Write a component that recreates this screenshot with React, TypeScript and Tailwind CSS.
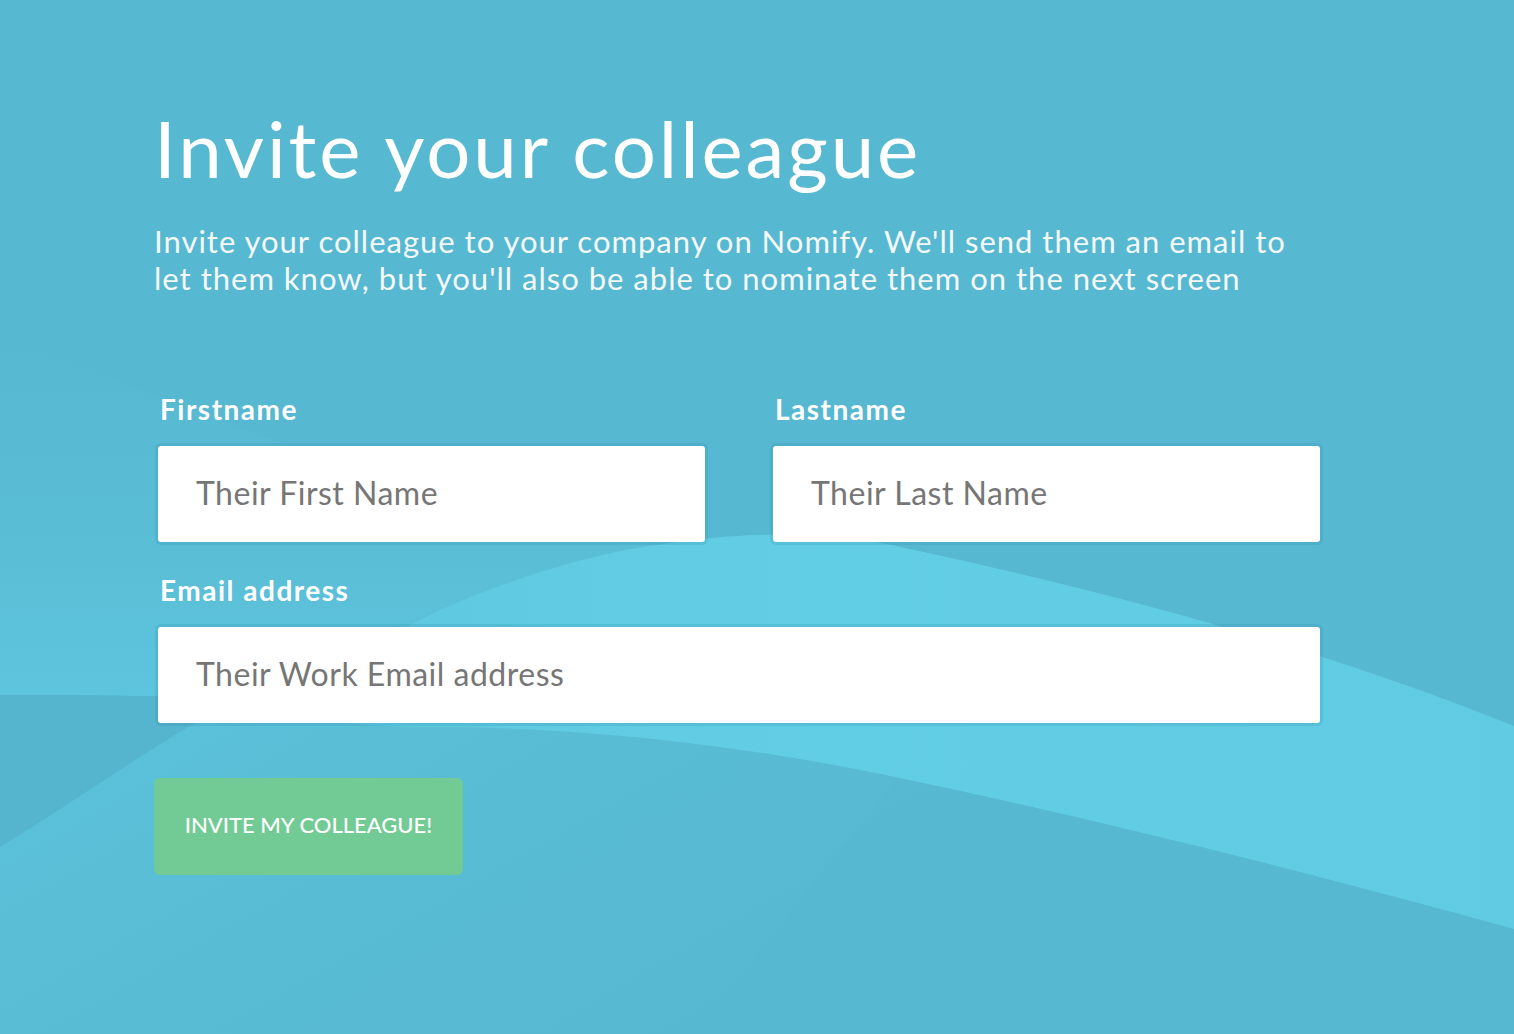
import { useState } from "react";

function Waves() {
  return (
    <svg
      className="absolute inset-0 h-full w-full"
      viewBox="0 0 1514 1034"
      preserveAspectRatio="none"
      aria-hidden="true"
    >
      <defs>
        <linearGradient id="glow" x1="0" y1="0" x2="0" y2="1">
          <stop offset="0" stopColor="#5bbdd6" stopOpacity="0" />
          <stop offset="1" stopColor="#5ec5de" stopOpacity="1" />
        </linearGradient>
        <linearGradient id="band" x1="0" y1="0" x2="1" y2="0">
          <stop offset="0" stopColor="#5ec7df" />
          <stop offset="0.45" stopColor="#62cee5" />
          <stop offset="1" stopColor="#60cbe2" />
        </linearGradient>
        <linearGradient id="low" x1="0" y1="0.2" x2="0.7" y2="0.6">
          <stop offset="0" stopColor="#5cc3dc" />
          <stop offset="0.55" stopColor="#59bcd5" />
          <stop offset="1" stopColor="#57b8d1" />
        </linearGradient>
      </defs>
      <rect width="1514" height="1034" fill="#57b8d1" />
      <path
        d="M0 330 C 200 420, 420 500, 660 545 L 412 622 C 330 660, 280 690, 240 700 C 160 695, 80 695, 0 695 Z"
        fill="url(#glow)"
      />
      <path d="M0 695 C 80 695, 160 695, 240 700 L 200 720 C 130 760, 60 810, 0 847 Z" fill="#55b5ce" />
      <path
        d="M0 847 C 70 805, 140 755, 200 720 C 290 668, 420 600, 657 545 C 760 528, 850 535, 900 547 C 1150 600, 1350 660, 1514 726 L 1514 1034 L 0 1034 Z"
        fill="url(#low)"
      />
      <path d="M900 778 C 1100 820, 1300 870, 1514 929 L 1514 1034 L 700 1034 C 760 950, 830 860, 900 778 Z" fill="#57b8d1" opacity="0.55" />
      <path
        d="M440 610 C 520 575, 600 552, 657 545 C 760 528, 850 535, 900 547 C 1150 600, 1350 660, 1514 726 L 1514 929 C 1300 870, 1100 820, 900 778 C 760 748, 600 728, 446 727 C 360 728, 300 720, 260 700 C 320 670, 380 640, 440 610 Z"
        fill="url(#band)"
      />
    </svg>
  );
}

function Field({
  label,
  placeholder,
  type = "text",
}: {
  label: string;
  placeholder: string;
  type?: string;
}) {
  const [value, setValue] = useState("");
  return (
    <label className="flex flex-col">
      <span className="pl-[2px] text-[28px] font-bold leading-[32px] tracking-[1.5px] text-white">
        {label}
      </span>
      <input
        type={type}
        value={value}
        onChange={(e) => setValue(e.target.value)}
        placeholder={placeholder}
        className="mt-[21px] h-[96px] w-full rounded-[3px] bg-white pb-[4px] pl-[38px] text-[32px] tracking-[0.5px] text-[#555] shadow-[0_0_0_3px_rgba(40,140,170,0.2)] outline-none placeholder:text-[#767676]"
      />
    </label>
  );
}

export default function App() {
  return (
    <div
      className="relative min-h-screen w-full overflow-hidden text-white"
      style={{ fontFamily: "Lato, 'Open Sans', sans-serif" }}
    >
      <Waves />
      <main className="relative pl-[154px] pt-[109px]">
        <h1 className="text-[78px] font-normal leading-[78px] tracking-[2.9px]">
          Invite your colleague
        </h1>
        <p className="mt-[36px] max-w-[1165px] text-[31px] leading-[37px] tracking-[1px] text-[#f4f8f9]">
          Invite your colleague to your company on Nomify. We'll send them an email to let them know,
          but you'll also be able to nominate them on the next screen
        </p>

        <form
          className="ml-[4px] mt-[96px] w-[1162px]"
          onSubmit={(e) => e.preventDefault()}
        >
          <div className="grid grid-cols-2 gap-x-[68px] gap-y-[32px]">
            <Field label="Firstname" placeholder="Their First Name" />
            <Field label="Lastname" placeholder="Their Last Name" />
            <div className="col-span-2">
              <Field label="Email address" placeholder="Their Work Email address" type="email" />
            </div>
          </div>
          <button
            type="submit"
            className="-ml-[4px] mt-[55px] flex h-[97px] w-[309px] items-center justify-center rounded-[6px] bg-[#72cb94] pb-[4px] text-[22px] font-medium uppercase text-white"
          >
            Invite my colleague!
          </button>
        </form>
      </main>
    </div>
  );
}
